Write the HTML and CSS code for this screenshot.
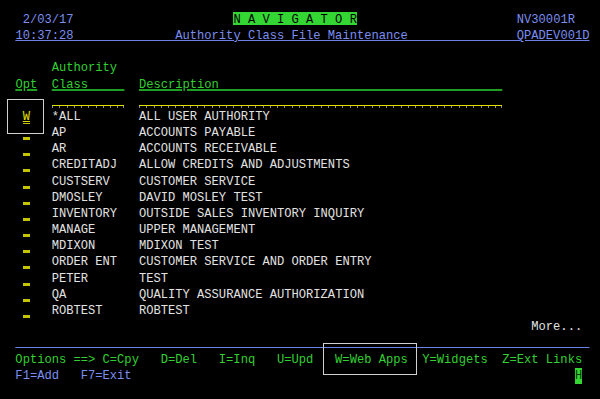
FILE: index.html
```html
<!DOCTYPE html>
<html lang="en">
<head>
    <meta charset="UTF-8">
    <meta name="viewport" content="width=device-width, initial-scale=1.0">
    <title>Authority Class File Maintenance</title>
    <link rel="stylesheet" href="styles.css">
</head>
<body>
<div class="screen">
    <div class="row"><span class="b">  2/03/17</span>                      <span class="banner">N A V I G A T O R</span>                      <span class="b">NV30001R</span></div>
    <div class="row"> <span class="b ul">10:37:28              Authority Class File Maintenance               QPADEV001D</span></div>
    <div class="row"></div>
    <div class="row g">      Authority</div>
    <div class="row g"> <span class="ulg">Opt</span>  <span class="ulg">Class     </span>  <span class="ulg">Description                                       </span></div>
    <div class="row">      <span class="fld">          </span>  <span class="fld">                                                  </span></div>
    <div class="row w">  <span class="fld opt on">W</span>   *ALL        ALL USER AUTHORITY</div>
    <div class="row w">  <span class="fld opt"> </span>   AP          ACCOUNTS PAYABLE</div>
    <div class="row w">  <span class="fld opt"> </span>   AR          ACCOUNTS RECEIVABLE</div>
    <div class="row w">  <span class="fld opt"> </span>   CREDITADJ   ALLOW CREDITS AND ADJUSTMENTS</div>
    <div class="row w">  <span class="fld opt"> </span>   CUSTSERV    CUSTOMER SERVICE</div>
    <div class="row w">  <span class="fld opt"> </span>   DMOSLEY     DAVID MOSLEY TEST</div>
    <div class="row w">  <span class="fld opt"> </span>   INVENTORY   OUTSIDE SALES INVENTORY INQUIRY</div>
    <div class="row w">  <span class="fld opt"> </span>   MANAGE      UPPER MANAGEMENT</div>
    <div class="row w">  <span class="fld opt"> </span>   MDIXON      MDIXON TEST</div>
    <div class="row w">  <span class="fld opt"> </span>   ORDER ENT   CUSTOMER SERVICE AND ORDER ENTRY</div>
    <div class="row w">  <span class="fld opt"> </span>   PETER       TEST</div>
    <div class="row w">  <span class="fld opt"> </span>   QA          QUALITY ASSURANCE AUTHORIZATION</div>
    <div class="row w">  <span class="fld opt"> </span>   ROBTEST     ROBTEST</div>
    <div class="row w">                                                                        More...</div>
    <div class="row"> <span class="b ul">                                                                               </span></div>
    <div class="row g"> Options ==&gt; C=Cpy   D=Del   I=Inq   U=Upd   W=Web Apps  Y=Widgets  Z=Ext Links</div>
    <div class="row b"> F1=Add   F7=Exit                                                             <span class="cursor">H</span></div>
    <div class="row"></div>

    <div class="focus opt-box"></div>
    <div class="focus web-box"></div>
</div>
</body>
</html>
```

FILE: styles.css
```css
html, body {
    margin: 0;
    padding: 0;
    background: #000;
}

.screen {
    position: relative;
    width: 600px;
    height: 399px;
    overflow: hidden;
    box-sizing: border-box;
    padding: 11.9px 0 0 8.1px;
    font-family: 'Liberation Mono', 'DejaVu Sans Mono', monospace;
    font-size: 12.12px;
    color: #e2e2e2;
}

.row {
    height: 16.18px;
    line-height: 16.18px;
    white-space: pre;
}

/* 5250 colours */
.b { color: #7b8ef0; }
.g { color: #33d033; }
.w { color: #e2e2e2; }

.ul {
    text-decoration: underline;
    text-decoration-color: #6c82e6;
    text-decoration-thickness: 1px;
}

.ulg {
    text-decoration: underline;
    text-decoration-color: #1f9f1f;
    text-decoration-thickness: 2px;
}

.banner {
    display: inline-block;
    line-height: 10.6px;
    padding-top: 3px;
    background: #33d633;
    color: #000;
}

/* input field: underline with cell ticks */
.fld {
    background-image:
        linear-gradient(#dede00, #dede00),
        repeating-linear-gradient(90deg, #8c8c8c 0 1px, transparent 1px 1ch),
        linear-gradient(#8c8c8c, #8c8c8c);
    background-repeat: no-repeat, repeat-x, no-repeat;
    background-size: 100% 1px, 100% 2px, 1px 3px;
    background-position: 0 11px, 0 12px, 100% 11px;
}

.fld.opt {
    color: #e0e000;
    background-image:
        linear-gradient(#c4c400, #c4c400),
        linear-gradient(#c4c400, #c4c400),
        linear-gradient(#c4c400, #c4c400);
    background-size: 100% 1px, 1px 3px, 1px 3px;
    background-position: 0 11px, 0 11px, 100% 11px;
}

.fld.opt.on {
    text-decoration: underline;
    text-decoration-thickness: 1px;
    background-position: 0 13px, 0 13px, 100% 13px;
}

.cursor {
    display: inline-block;
    width: 1ch;
    height: 16.18px;
    vertical-align: top;
    background: #33d633;
    color: #0a3a0a;
}

.focus {
    position: absolute;
    box-sizing: border-box;
    border: 1px solid #d0d0d0;
}

.opt-box {
    left: 7px;
    top: 99px;
    width: 37px;
    height: 35px;
}

.web-box {
    left: 323px;
    top: 343px;
    width: 94px;
    height: 32px;
}
```
